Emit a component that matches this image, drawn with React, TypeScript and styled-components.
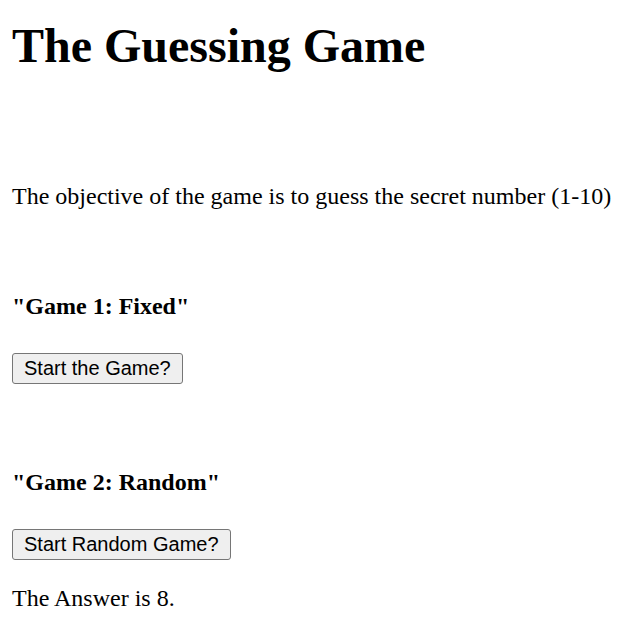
import React from "react";
import styled, { createGlobalStyle } from "styled-components";

const GlobalStyle = createGlobalStyle`
  html, body { margin: 0; padding: 0; background: #ffffff; }
  body { font-family: "Liberation Serif", "Times New Roman", serif; color: #000; }
`;

const Page = styled.main`
  display: flex;
  flex-direction: column;
  align-items: flex-start;
  padding: 18px 12px 0 12px;
`;

const Title = styled.h1`
  margin: 0;
  font-size: 48px;
  line-height: 55px;
  font-weight: bold;
`;

const Text = styled.p<{ $top: number }>`
  margin: ${(p) => p.$top}px 0 0 0;
  font-size: 24px;
  line-height: 28px;
`;

const GameHeading = styled.h4<{ $top: number }>`
  margin: ${(p) => p.$top}px 0 0 0;
  font-size: 24px;
  line-height: 28px;
  font-weight: bold;
`;

const GameButton = styled.button`
  margin-top: 33px;
  font-family: "Liberation Sans", Arial, sans-serif;
  font-size: 20px;
  line-height: 23px;
  height: 31px;
  color: #000;
  background: #efefef;
  border: 1px solid #767676;
  border-radius: 3px;
  padding: 3px 11px;
  cursor: pointer;
`;

export default function App() {
  return (
    <>
      <GlobalStyle />
      <Page>
        <Title>The Guessing Game</Title>
        <Text $top={109}>The objective of the game is to guess the secret number (1-10)</Text>
        <GameHeading $top={82}>"Game 1: Fixed"</GameHeading>
        <GameButton>Start the Game?</GameButton>
        <GameHeading $top={84}>"Game 2: Random"</GameHeading>
        <GameButton>Start Random Game?</GameButton>
        <Text $top={24}>The Answer is 8.</Text>
      </Page>
    </>
  );
}
